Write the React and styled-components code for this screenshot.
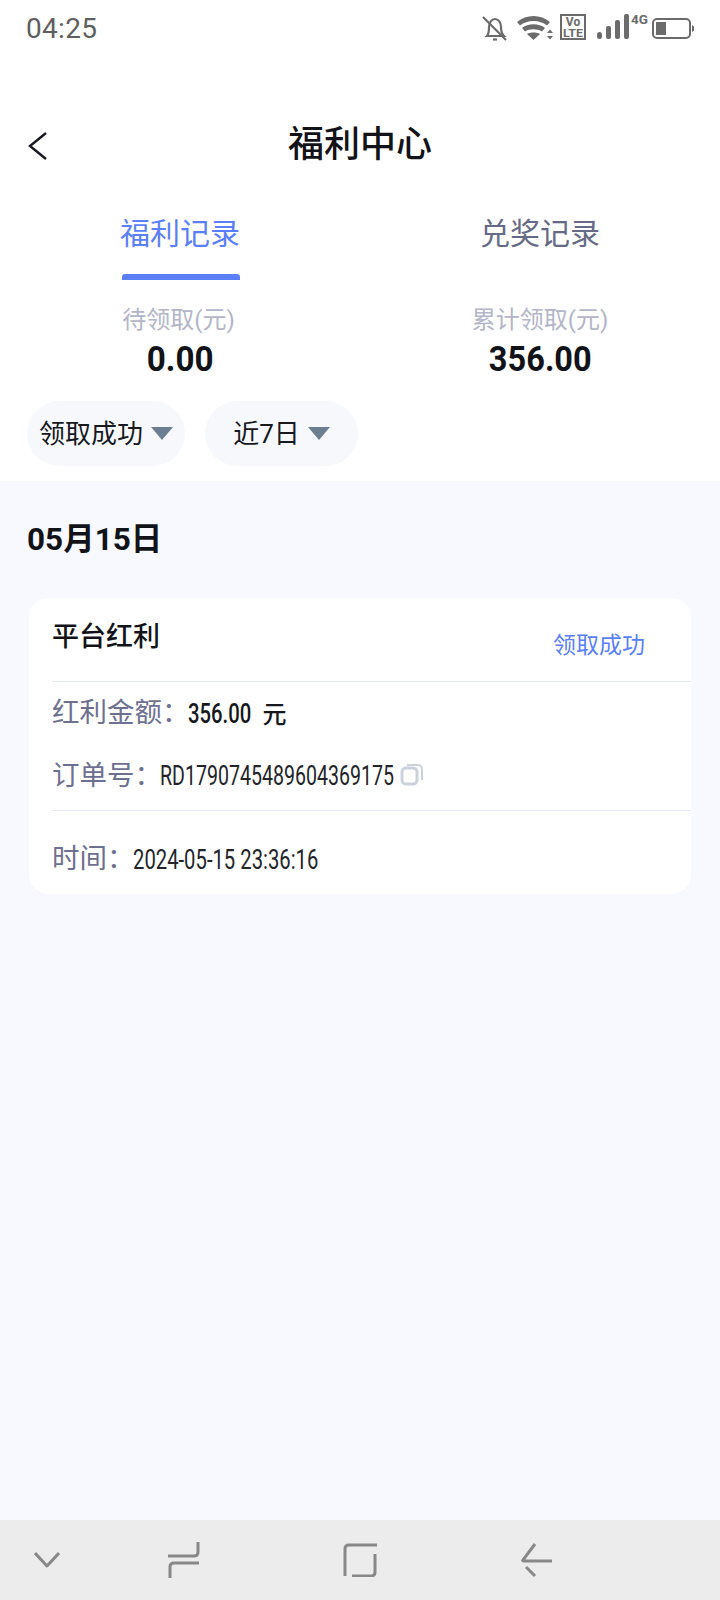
import React from 'react'
import styled, { createGlobalStyle } from 'styled-components'

const cjk = `Roboto, "Noto Sans CJK SC", sans-serif`

const GlobalStyle = createGlobalStyle`
  html, body {
    margin: 0;
    padding: 0;
    background: #fff;
  }
  * {
    box-sizing: border-box;
  }
`
const Page = styled.div`
  width: 720px;
  height: 1600px;
  display: flex;
  flex-direction: column;
  font-family: ${cjk};
  color: #111318;
  background: #fff;
`
const StatusBar = styled.div`
  height: 56px;
  display: flex;
  align-items: center;
  justify-content: space-between;
  padding: 0 26px 0 26px;
`
const Clock = styled.span`
  font-size: 28px;
  font-weight: 400;
  color: #5f5f5f;
  letter-spacing: 0.3px;
`
const StatusIcons = styled.div`
  display: flex;
  align-items: center;
`
const Header = styled.div`
  height: 60px;
  margin-top: 55px;
  position: relative;
  display: flex;
  align-items: center;
  justify-content: center;
`
const Back = styled.svg`
  position: absolute;
  left: 27px;
  top: 20px;
`
const Title = styled.h1`
  margin: 0;
  font-size: 36px;
  font-weight: 500;
`
const Columns = styled.div`
  display: grid;
  grid-template-columns: 1fr 1fr;
`
const Tabs = styled(Columns)`
  margin-top: 33px;
`
const Tab = styled.div`
  display: flex;
  flex-direction: column;
  align-items: center;
  font-size: 30px;
  line-height: 60px;
  color: ${p => (p.$active ? '#5b7ff7' : '#666a86')};
`
const Indicator = styled.div`
  width: 118px;
  height: 6px;
  margin: 10px 0 0 2px;
  border-radius: 3px 3px 0 0;
  background: ${p => (p.$active ? '#5b7ff7' : 'transparent')};
`
const Stats = styled(Columns)`
  margin-top: 20px;
`
const Stat = styled.div`
  display: flex;
  flex-direction: column;
  align-items: center;
`
const StatLabel = styled.div`
  font-size: 24px;
  line-height: 40px;
  color: #b3b5c8;
  margin-left: ${p => p.$shift || 0}px;
`
const StatValue = styled.div`
  width: ${p => p.$width}px;
  margin-top: 1px;
  font-size: 35px;
  line-height: 38px;
  font-weight: 700;
  color: #111318;
  display: flex;
  justify-content: center;
  white-space: nowrap;
`
const Squeezed = styled.span`
  display: inline-block;
  flex: none;
  white-space: nowrap;
  transform: scaleX(${p => p.$scale});
  transform-origin: ${p => p.$origin || 'left'} center;
`
const Filters = styled.div`
  display: flex;
  gap: 20px;
  padding: 0 27px;
  margin-top: 22px;
`
const Chip = styled.div`
  height: 65px;
  width: ${p => p.$width}px;
  border-radius: 33px;
  background: #f6f8fc;
  display: flex;
  align-items: center;
  justify-content: center;
  gap: 8px;
  font-size: 26px;
  line-height: 62px;
  color: #17191f;
`
const Caret = styled.span`
  width: 0;
  height: 0;
  border-left: 11px solid transparent;
  border-right: 11px solid transparent;
  border-top: 13px solid #6c7f92;
`
const Content = styled.div`
  flex: 1;
  margin-top: 15px;
  background: #f7f9fe;
  padding: 0 29px;
`
const DateLabel = styled.div`
  margin: 39px 0 0 -2px;
  font-size: 31.500px;
  line-height: 40px;
  font-weight: 700;
`
const Card = styled.div`
  margin-top: 38px;
  height: 296px;
  background: #fff;
  border-radius: 20px;
  padding-left: 23px;
`
const CardHead = styled.div`
  height: 84px;
  display: flex;
  justify-content: space-between;
  border-bottom: 1px solid #e4e9f6;
  padding-right: 46px;
`
const CardTitle = styled.div`
  font-size: 27px;
  font-weight: 500;
  line-height: 38px;
  margin-top: 20px;
`
const CardStatus = styled.div`
  font-size: 23px;
  line-height: 32px;
  margin-top: 32px;
  color: #5b7ff7;
`
const Row = styled.div`
  height: ${p => p.$height}px;
  padding: ${p => p.$top || 0}px 0 ${p => p.$bottom || 0}px;
  display: flex;
  align-items: center;
  border-bottom: ${p => (p.$line ? '1px solid #e4e9f6' : 'none')};
`
const Label = styled.span`
  font-size: 27.500px;
  color: #6e7090;
`
const Value = styled.span`
  width: ${p => p.$width}px;
  flex: none;
  display: flex;
  align-items: center;
  margin: ${p => p.$down}px 0 0 -2px;
  font-size: 27px;
  font-weight: ${p => (p.$strong ? 500 : 400)};
  color: ${p => (p.$strong ? '#16181d' : '#23252b')};
`
const Unit = styled.span`
  margin: 4px 0 0 10px;
  font-size: 24px;
  font-weight: 500;
  color: #16181d;
`
const CopyIcon = styled.svg`
  margin: 2px 0 0 7px;
`
const NavBar = styled.div`
  height: 80px;
  background: #ececec;
  display: flex;
  align-items: center;
  padding-left: 34px;
`
const NavIcon = styled.svg`
  margin-left: ${p => p.$left}px;
  flex: none;
`

const App = () => {
  return (
    <Page>
      <GlobalStyle />
      <StatusBar>
        <Clock>04:25</Clock>
        <StatusIcons>
          <svg width="212" height="30" viewBox="0 0 212 30" fill="none">
            <g stroke="#6b6b6b" strokeWidth="2.200">
              <path d="M5 23c2-2 2-5 2-9 0-5 3-8 6-8s6 3 6 8c0 4 1 7 3 9H5z" />
              <path d="M11 26.500h4" />
              <path d="M1 4l23 23" />
            </g>
            <g fill="#6b6b6b">
              <path d="M35 9c9-8 24-8 33 0l-3 3.500c-7-6-20-6-27 0z" />
              <path d="M40 15c6-5 17-5 23 0l-3 3.500c-4-3-13-3-17 0z" />
              <path d="M45 21c3-2 10-2 13 0l-6.500 6z" />
              <path d="M65 20l3-3.500 3 3.500zM65 23h6l-3 3.500z" />
            </g>
            <rect x="79" y="2" width="24" height="24" stroke="#6b6b6b" strokeWidth="2" />
            <text x="91" y="13" fontFamily="Roboto" fontWeight="700" fontSize="12" fill="#6b6b6b" textAnchor="middle">Vo</text>
            <text x="91" y="24" fontFamily="Roboto" fontWeight="700" fontSize="11.500" fill="#6b6b6b" textAnchor="middle" textLength="20" lengthAdjust="spacingAndGlyphs">LTE</text>
            <g fill="#6b6b6b">
              <rect x="115" y="19" width="5" height="7" rx="2.500" />
              <rect x="124" y="13" width="5" height="13" rx="2" />
              <rect x="133" y="7" width="5" height="19" rx="2" />
              <rect x="142" y="1" width="5" height="25" rx="2" />
            </g>
            <text x="149" y="11" fontFamily="Roboto" fontWeight="700" fontSize="13" fill="#6b6b6b" textLength="17" lengthAdjust="spacingAndGlyphs">4G</text>
            <rect x="171" y="6" width="37" height="19" rx="4" stroke="#6b6b6b" strokeWidth="2" />
            <rect x="174" y="9" width="10" height="13" fill="#6b6b6b" />
            <path d="M210 12l2 1.500v4l-2 1.500z" fill="#6b6b6b" />
          </svg>
        </StatusIcons>
      </StatusBar>
      <Header>
        <Back width="22" height="30" viewBox="0 0 22 30" fill="none">
          <path d="M19 2L3 15l16 13" stroke="#17191f" strokeWidth="2.400" />
        </Back>
        <Title>福利中心</Title>
      </Header>
      <Tabs>
        <Tab $active>
          福利记录
          <Indicator $active />
        </Tab>
        <Tab>
          兑奖记录
          <Indicator />
        </Tab>
      </Tabs>
      <Stats>
        <Stat>
          <StatLabel $shift={-3}>待领取(元)</StatLabel>
          <StatValue $width={64}><Squeezed $scale={0.95} $origin="center">0.00</Squeezed></StatValue>
        </Stat>
        <Stat>
          <StatLabel>累计领取(元)</StatLabel>
          <StatValue $width={104}><Squeezed $scale={0.93} $origin="center">356.00</Squeezed></StatValue>
        </Stat>
      </Stats>
      <Filters>
        <Chip $width={158}>领取成功<Caret /></Chip>
        <Chip $width={153}>近7日<Caret /></Chip>
      </Filters>
      <Content>
        <DateLabel>05月15日</DateLabel>
        <Card>
          <CardHead>
            <CardTitle>平台红利</CardTitle>
            <CardStatus>领取成功</CardStatus>
          </CardHead>
          <Row $height={62} $bottom={6}>
            <Label>红利金额：</Label>
            <Value $strong $width={65} $down={8}>
              <Squeezed $scale={0.75}>356.00</Squeezed>
            </Value>
            <Unit>元</Unit>
          </Row>
          <Row $height={67} $bottom={8} $line>
            <Label>订单号：</Label>
            <Value $width={233} $down={5}>
              <Squeezed $scale={0.725}>RD1790745489604369175</Squeezed>
            </Value>
            <CopyIcon width="24" height="24" viewBox="0 0 24 24" fill="none">
              <rect x="2" y="6" width="15" height="16" rx="4" stroke="#cdd1de" strokeWidth="3" />
              <path d="M7 3h11a4 4 0 0 1 4 4v11" stroke="#cdd1de" strokeWidth="2" />
            </CopyIcon>
          </Row>
          <Row $height={83} $top={6}>
            <Label>时间：</Label>
            <Value $width={184} $down={8}>
              <Squeezed $scale={0.75}>2024-05-15 23:36:16</Squeezed>
            </Value>
          </Row>
        </Card>
      </Content>
      <NavBar>
        <NavIcon $left={0} width="26" height="16" viewBox="0 0 26 16" fill="none">
          <path d="M1 1l12 13L25 1" stroke="#888" strokeWidth="3" strokeLinejoin="round" />
        </NavIcon>
        <NavIcon $left={108} width="32" height="36" viewBox="0 0 32 36" fill="none">
          <path d="M0 14h26q4 0 4-4V0" stroke="#888" strokeWidth="3" />
          <path d="M31 21H6q-4 0-4 4v11" stroke="#888" strokeWidth="3" />
        </NavIcon>
        <NavIcon $left={143} width="34" height="34" viewBox="0 0 34 34" fill="none">
          <path d="M2 33V6q0-4 4-4h28" stroke="#888" strokeWidth="3" />
          <path d="M32 11v18q0 4-4 4H9" stroke="#888" strokeWidth="3" />
        </NavIcon>
        <NavIcon $left={143} width="32" height="34" viewBox="0 0 32 34" fill="none">
          <path d="M15 1L3 17q-1 1 1 1h28" stroke="#888" strokeWidth="3" />
          <path d="M6 24l9 9" stroke="#888" strokeWidth="3" />
        </NavIcon>
      </NavBar>
    </Page>
  )
}

export default App
